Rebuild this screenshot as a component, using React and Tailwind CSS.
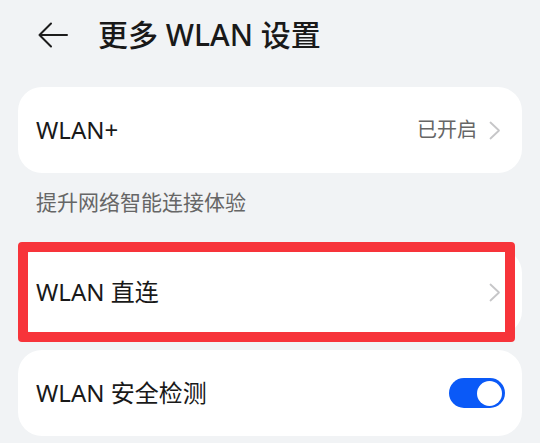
import React from "react";

function Chevron() {
  return (
    <svg width="12" height="19" viewBox="0 0 12 19" fill="none" className="shrink-0">
      <path d="M1.5 1.5 L10 9.5 L1.5 17.5" stroke="#c6c6c8" strokeWidth="1.8" strokeLinecap="round" strokeLinejoin="round" />
    </svg>
  );
}

function Toggle() {
  return (
    <div className="w-[56px] h-[30px] rounded-full bg-[#0a59f7] flex items-center justify-end pr-[3px] shrink-0">
      <div className="w-[25px] h-[25px] rounded-full bg-white" />
    </div>
  );
}

export default function App() {
  return (
    <div
      className="w-[540px] h-[443px] overflow-hidden bg-[#f1f3f5] text-[#191919]"
      style={{ fontFamily: '"Noto Sans", "Noto Sans CJK SC", sans-serif' }}
    >
      {/* header */}
      <div className="h-[70px] flex items-center pl-[38px]">
        <svg width="30" height="26" viewBox="0 0 30 26" fill="none" className="shrink-0">
          <path d="M13 1.5 L1.5 13 L13 24.5 M1.5 13 H29" stroke="#1c1c1c" strokeWidth="2" strokeLinecap="round" strokeLinejoin="round" />
        </svg>
        <h1 className="ml-[30px] text-[30px] leading-none font-medium">更多 WLAN 设置</h1>
      </div>

      <div className="px-[18px]">
        {/* WLAN+ */}
        <div className="mt-[17px] h-[86px] rounded-[24px] bg-white flex items-center pl-[18px] pr-[21px]">
          <span className="text-[24px] flex-1">WLAN+</span>
          <span className="text-[20px] text-[#666666] mr-[12px]">已开启</span>
          <Chevron />
        </div>

        <p className="pt-[15px] pl-[18px] text-[21px] leading-[28px] text-[#666666] mb-[33px]">
          提升网络智能连接体验
        </p>

        {/* WLAN 直连 */}
        <div className="relative h-[86px] rounded-[24px] bg-white flex items-center pl-[18px] pr-[21px]">
          <span className="text-[24px] flex-1">WLAN 直连</span>
          <Chevron />
          <div className="absolute left-0 top-[-7px] w-[497px] h-[100px] border-[10px] border-[#f7343a] rounded-[4px]" />
        </div>

        {/* WLAN 安全检测 */}
        <div className="mt-[15px] h-[86px] rounded-[24px] bg-white flex items-center pl-[18px] pr-[17px]">
          <span className="text-[24px] flex-1">WLAN 安全检测</span>
          <Toggle />
        </div>
      </div>
    </div>
  );
}
